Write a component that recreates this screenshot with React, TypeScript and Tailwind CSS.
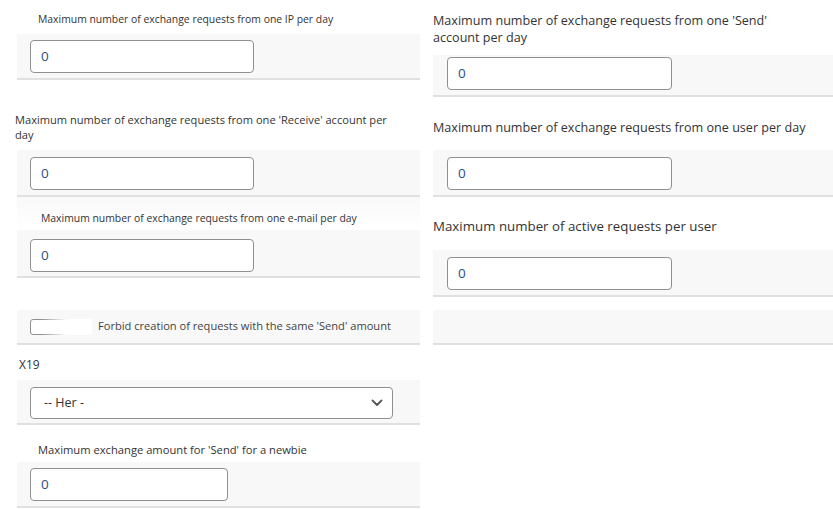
import React from "react";

const font = { fontFamily: '"Open Sans", "Noto Sans", sans-serif' };

const NumberBox = ({ width }: { width: string }) => (
  <div
    className={`${width} h-[33px] rounded-[4px] border border-[#8f8f8f] bg-white flex items-center pl-[10px] text-[13.5px] text-[#284f86]`}
  >
    0
  </div>
);

const App = () => {
  return (
    <div className="w-[833px] h-[510px] bg-white overflow-hidden flex text-[#333]" style={font}>
      {/* left column */}
      <div className="w-[403px] ml-[17px] flex flex-col">
        <div className="h-[34px] pt-[12px] pl-[21px] text-[10.4px] leading-[15px]">
          Maximum number of exchange requests from one IP per day
        </div>
        <div className="h-[46px] pt-[6px] pl-[13px] bg-[#f8f8f8] border-b-2 border-[#e0e0e0]">
          <NumberBox width="w-[224px]" />
        </div>

        <div className="h-[70px] pt-[32px] -ml-[2px] w-[385px] text-[11.1px] leading-[15px]">
          Maximum number of exchange requests from one 'Receive' account per day
        </div>
        <div className="h-[47px] pt-[7px] pl-[13px] bg-[#f8f8f8] border-b-2 border-[#e0e0e0]">
          <NumberBox width="w-[224px]" />
        </div>

        <div className="h-[33px] pt-[14px] pl-[24px] text-[10.4px] leading-[15px] bg-gradient-to-b from-[#f9f9f9] to-white">
          Maximum number of exchange requests from one e-mail per day
        </div>
        <div className="h-[48px] pt-[9px] pl-[13px] bg-[#f8f8f8] border-b-2 border-[#e0e0e0]">
          <NumberBox width="w-[224px]" />
        </div>

        <div className="h-[32px]" />
        <div className="h-[35px] pl-[13px] flex items-center bg-[#f8f8f8] border-b-2 border-[#e0e0e0]">
          <div className="relative w-[62px] h-[16px] rounded-[3px] border border-[#8f8f8f] bg-white">
            <div className="absolute inset-y-[-1px] left-[10px] right-[-1px] bg-gradient-to-r from-transparent via-white to-white" />
          </div>
          <span className="ml-[6px] text-[11.1px] text-[#444]">
            Forbid creation of requests with the same 'Send' amount
          </span>
        </div>

        <div className="h-[35px] pt-[12px] pl-[2px] text-[12px] leading-[16px]">X19</div>
        <div className="h-[45px] pt-[7px] pl-[13px] bg-[#f8f8f8] border-b-2 border-[#e0e0e0]">
          <div className="w-[363px] h-[32px] rounded-[4px] border border-[#8f8f8f] bg-white flex items-center justify-between pl-[13px] pr-[9px] text-[12.5px] text-[#333]">
            <span>-- Her -</span>
            <svg width="12" height="8" viewBox="0 0 12 8" fill="none">
              <path d="M1.5 1.5 L6 6 L10.5 1.5" stroke="#555" strokeWidth="1.8" strokeLinecap="round" strokeLinejoin="round" />
            </svg>
          </div>
        </div>

        <div className="h-[37px] pt-[17px] pl-[21px] text-[11.2px] leading-[15px]">
          Maximum exchange amount for 'Send' for a newbie
        </div>
        <div className="h-[46px] pt-[6px] pl-[13px] bg-[#f8f8f8] border-b-2 border-[#e0e0e0]">
          <NumberBox width="w-[198px]" />
        </div>
      </div>

      {/* right column */}
      <div className="w-[400px] ml-[13px] flex flex-col">
        <div className="h-[55px] pt-[12px] w-[345px] text-[12.6px] leading-[17px]">
          Maximum number of exchange requests from one 'Send' account per day
        </div>
        <div className="h-[42px] pt-[2px] pl-[14px] bg-[#f8f8f8] border-b-2 border-[#e0e0e0]">
          <NumberBox width="w-[225px]" />
        </div>

        <div className="h-[53px] pt-[22px] text-[12.6px] leading-[17px]">
          Maximum number of exchange requests from one user per day
        </div>
        <div className="h-[47px] pt-[7px] pl-[14px] bg-[#f8f8f8] border-b-2 border-[#e0e0e0]">
          <NumberBox width="w-[225px]" />
        </div>

        <div className="h-[53px] pt-[21px] text-[13.3px] leading-[17px]">
          Maximum number of active requests per user
        </div>
        <div className="h-[47px] pt-[7px] pl-[14px] bg-[#f8f8f8] border-b-2 border-[#e0e0e0]">
          <NumberBox width="w-[225px]" />
        </div>

        <div className="h-[13px]" />
        <div className="h-[35px] bg-[#f8f8f8] border-b-2 border-[#e0e0e0]" />
      </div>
    </div>
  );
};

export default App;
